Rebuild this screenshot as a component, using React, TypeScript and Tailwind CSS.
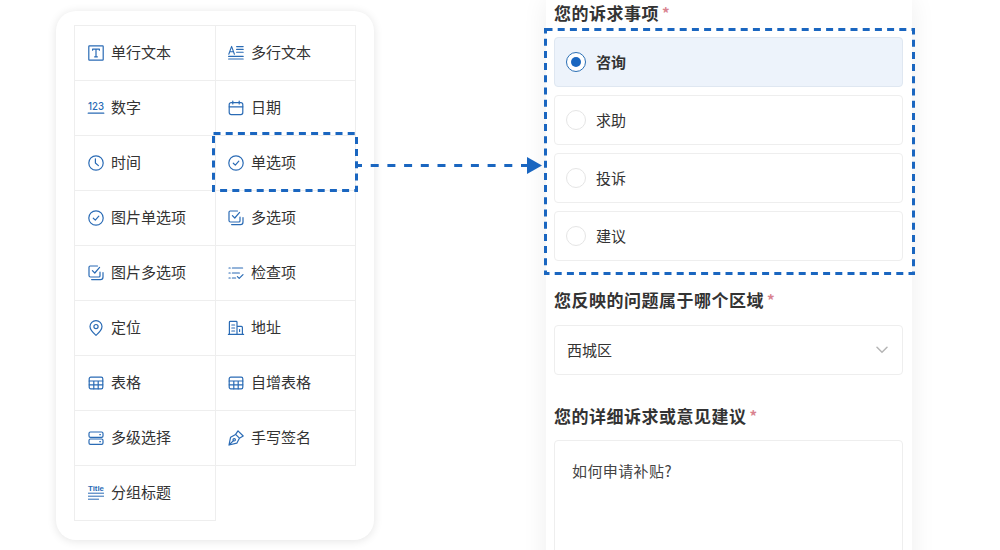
import React from "react";

const C = "#2a6bb5";
const S = { fill: "none", stroke: C, strokeWidth: 1.2, strokeLinecap: "round" as const, strokeLinejoin: "round" as const };

function Ico({ children }: { children: React.ReactNode }) {
  return (
    <svg width="16" height="16" viewBox="0 0 16 16" className="shrink-0 mr-[7px] overflow-visible" {...S}>
      {children}
    </svg>
  );
}

const Circle = () => (
  <Ico>
    <circle cx="8" cy="8" r="7.2" />
    <path d="M5.3 8.2 7.3 10.1 10.8 6.2" />
  </Ico>
);
const Multi = () => (
  <Ico>
    <path d="M9.5 1H2.2Q1 1 1 2.2V10.5Q1 12 2.5 12H11Q12 12 12 11V7" />
    <path d="M4.4 5.6 6.8 8 11.6 2.4" />
    <path d="M3.6 14.6H12.5Q15 14.6 15 12V7.6" />
  </Ico>
);
const Table = () => (
  <Ico>
    <rect x="1.2" y="2.2" width="13.6" height="11.6" rx="1.6" />
    <path d="M1.2 6H14.8M1.2 9.8H14.8M5.8 6V13.8M10.2 6V13.8" />
  </Ico>
);

const icons: Record<string, React.ReactNode> = {
  单行文本: (
    <Ico>
      <rect x="0.8" y="0.8" width="14.4" height="14.4" rx="0.6" />
      <path d="M4.6 5.2V4.2H11.4V5.2M8 4.2V11.8M6.6 11.8H9.4" />
    </Ico>
  ),
  多行文本: (
    <Ico>
      <path d="M0.8 9.2 3.6 1.4 6.4 9.2M1.8 6.8H5.4M8.6 1.6H15.2M8.6 4.4H15.2M8.6 7.2H15.2M0.6 11.4H15.2M0.6 14H15.2" strokeWidth="1.1" />
    </Ico>
  ),
  数字: (
    <Ico>
      <text x="0" y="10.4" fontSize="11" fontWeight="500" fontFamily="Inter, Liberation Sans, sans-serif" fill={C} stroke="none" textLength="16" lengthAdjust="spacingAndGlyphs">
        123
      </text>
      <path d="M0.2 13.2H15.8" />
    </Ico>
  ),
  日期: (
    <Ico>
      <rect x="1.2" y="2.6" width="13.6" height="12" rx="2" />
      <path d="M1.2 6.8H14.8M4.8 1V4M11.2 1V4" />
    </Ico>
  ),
  时间: (
    <Ico>
      <circle cx="8" cy="8" r="7.2" />
      <path d="M7.4 3.8V8L10.4 10.6" />
    </Ico>
  ),
  单选项: <Circle />,
  图片单选项: <Circle />,
  多选项: <Multi />,
  图片多选项: <Multi />,
  检查项: (
    <Ico>
      <path d="M1 3H2.2M4.4 3H14.6M1 8H2.2M4.4 8H11.4M1 13H2.2M4.4 13H7.6M9.4 11.6 11.2 13.4 15 9.6" />
    </Ico>
  ),
  定位: (
    <Ico>
      <path d="M8 15.4C5 12.8 2 10 2 6.6A6 6 0 0 1 14 6.6C14 10 11 12.8 8 15.4Z" />
      <circle cx="8" cy="6.6" r="2.1" />
    </Ico>
  ),
  地址: (
    <Ico>
      <path d="M1.4 14.2V2.2Q1.4 1.4 2.2 1.4H8.2Q9 1.4 9 2.2V14.2M9 6.4H13.4Q14.4 6.4 14.4 7.4V14.2M0.4 14.4H15.6M3.8 5H6.6M3.8 8H6.6M3.8 11H6.6M11.6 9.6V11.4" />
    </Ico>
  ),
  表格: <Table />,
  自增表格: <Table />,
  多级选择: (
    <Ico>
      <rect x="1" y="2" width="14" height="5.4" rx="1.4" />
      <rect x="1" y="9" width="14" height="5.4" rx="1.4" />
      <path d="M11.8 4.7H12.4M11.8 11.7H12.4" />
    </Ico>
  ),
  手写签名: (
    <Ico>
      <path d="M1 15 2.6 7.2 7.6 4.4 11.4 8.2 8.8 13.2 1 15ZM1 15 5.2 10.8M7.6 4.4 10 0.8 15.2 6 11.4 8.2" />
      <circle cx="6.2" cy="9.8" r="1.2" />
    </Ico>
  ),
  分组标题: (
    <Ico>
      <text x="0" y="6" fontSize="8" fontWeight="700" fontFamily="Liberation Sans, sans-serif" fill={C} stroke="none" textLength="16" lengthAdjust="spacingAndGlyphs">
        Title
      </text>
      <path d="M0.4 8.2H15.6M0.4 11.2H15.6M0.4 14.2H10.6" strokeWidth="1" />
    </Ico>
  ),
};

const items = [
  "单行文本", "多行文本", "数字", "日期", "时间", "单选项", "图片单选项", "多选项",
  "图片多选项", "检查项", "定位", "地址", "表格", "自增表格", "多级选择", "手写签名", "分组标题",
];

function DashBox({ className, w, h }: { className: string; w: number; h: number }) {
  return (
    <svg width={w} height={h} viewBox={`0 0 ${w} ${h}`} className={`absolute ${className}`}>
      <rect x="1.5" y="1.5" width={w - 3} height={h - 3} fill="none" stroke="#1a66c0" strokeWidth="3" strokeDasharray="7 5.2" />
    </svg>
  );
}

function Label({ text, cls }: { text: string; cls: string }) {
  return (
    <div className={`flex items-center h-[26px] text-[17px] leading-[26px] font-bold text-[#333] tracking-[0.5px] ${cls}`}>
      {text}
      <span className="text-[#d9838f] ml-[3px] tracking-normal text-[15px]">*</span>
    </div>
  );
}

function Option({ text, active }: { text: string; active?: boolean }) {
  return (
    <div
      className={`flex items-center h-[50px] rounded-[4px] border pl-[11px] ${
        active ? "bg-[#edf3fb] border-[#dfe7f1]" : "bg-white border-[#eeeeee]"
      }`}
    >
      <div
        className={`flex items-center justify-center w-[20px] h-[20px] rounded-full border mr-[10px] ${
          active ? "border-[#2a6fb5] bg-white" : "border-[#e5e5e5] bg-white"
        }`}
      >
        {active && <div className="w-[10px] h-[10px] rounded-full bg-[#1a66c0]" />}
      </div>
      <span className={`text-[15px] ${active ? "font-bold text-[#333]" : "text-[#333]"}`}>{text}</span>
    </div>
  );
}

export default function App() {
  return (
    <div
      className="relative w-[1000px] h-[550px] overflow-hidden bg-white flex items-start"
      style={{ fontFamily: '"Noto Sans CJK SC", "Noto Sans", sans-serif' }}
    >
      <div className="ml-[56px] mt-[11px] w-[318px] h-[529px] rounded-[20px] bg-white shadow-[0_1px_10px_rgba(0,0,0,0.11)] pl-[18px] pt-[14px]">
        <div className="grid grid-cols-[141px_140px] auto-rows-[55px] border-l border-t border-[#eeeeee] w-[282px]">
          {items.map((t) => (
            <div key={t} className="flex items-center pl-[13px] even:pl-[12px] border-r border-b border-[#eeeeee] text-[#333] text-[15px] pb-[1px]">
              {icons[t]}
              <span className="whitespace-nowrap">{t}</span>
            </div>
          ))}
        </div>
      </div>

      <div className="ml-[172px] w-[366px] h-[700px] bg-white shadow-[0_0_24px_rgba(0,0,0,0.07)] pl-[8px] pr-[9px]">
        <Label text="您的诉求事项" cls="mt-0" />
        <div className="flex flex-col gap-[8px] mt-[11px]">
          <Option text="咨询" active />
          <Option text="求助" />
          <Option text="投诉" />
          <Option text="建议" />
        </div>
        <Label text="您反映的问题属于哪个区域" cls="mt-[26px]" />
        <div className="flex items-center justify-between h-[50px] mt-[12px] rounded-[4px] border border-[#eeeeee] pl-[12px] pr-[14px] text-[15px] text-[#333]">
          西城区
          <svg width="12" height="8" viewBox="0 0 12 8" fill="none" stroke="#b5b5b5" strokeWidth="1.5" strokeLinecap="round">
            <path d="M1 1.2 6 6.2 11 1.2" />
          </svg>
        </div>
        <Label text="您的详细诉求或意见建议" cls="mt-[28px]" />
        <div className="h-[200px] mt-[11px] rounded-[4px] border border-[#eeeeee] pl-[17px] pt-[18px] text-[15px] leading-[24px] tracking-[0.4px] text-[#444]">
          如何申请补贴?
        </div>
      </div>

      <DashBox className="left-[212px] top-[132px]" w={146} h={60} />
      <DashBox className="left-[544px] top-[28px]" w={371} h={247} />
      <svg width="186" height="20" viewBox="0 0 186 20" className="absolute left-[358px] top-[156px]" fill="#1a66c0">
        <path d="M0 9.5H170" stroke="#1a66c0" strokeWidth="3" strokeDasharray="8 8.7" strokeDashoffset="4" />
        <path d="M169 1 184 9.5 169 18Z" />
      </svg>
    </div>
  );
}
